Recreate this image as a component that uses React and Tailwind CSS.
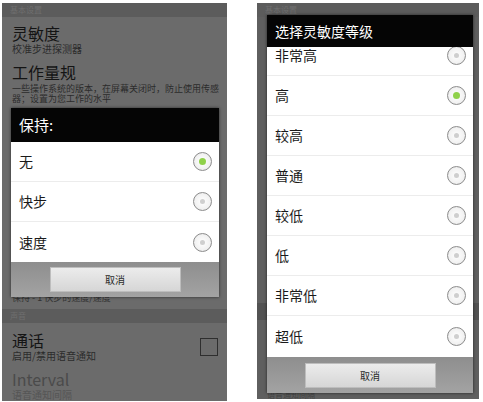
import React from 'react';

const font = { fontFamily: '"Noto Sans CJK SC", "Noto Sans", sans-serif' };

function Radio({ checked }) {
    return (
        <div className="w-[19px] h-[19px] rounded-full border-[1.5px] border-[#8c8c8c] bg-[radial-gradient(circle,#ffffff_0%,#f2f2f2_60%,#d9d9d9_100%)] flex items-center justify-center flex-shrink-0">
            {checked
                ? <div className="w-[7px] h-[7px] rounded-full bg-[#8fd14a]" />
                : <div className="w-[5px] h-[5px] rounded-full bg-[#cfcfcf]" />}
        </div>
    );
}

function OptionRow({ label, checked, last }) {
    return (
        <div className={`h-[40px] flex items-center justify-between pl-[8px] pr-[7px] ${last ? '' : 'border-b border-[#ececec]'}`}>
            <span className="text-[14px] text-[#1a1a1a]">{label}</span>
            <Radio checked={checked} />
        </div>
    );
}

function CancelBar({ height }) {
    return (
        <div className="bg-gradient-to-b from-[#8e8e8e] to-[#a3a3a3] flex items-center justify-center" style={{ height }}>
            <button className="w-[131px] h-[25px] bg-gradient-to-b from-[#ececec] to-[#d6d6d6] border border-[#bdbdbd] text-[10px] text-[#2a2a2a]">取消</button>
        </div>
    );
}

// title 16px line + subtitle 12px line
function SettingItem({ title, sub, dim, right }) {
    return (
        <div className="flex items-center justify-between pl-[10px] pr-[8px]">
            <div className="flex flex-col">
                <span className={`text-[16px] leading-[16px] ${dim ? 'text-[#4a4a4a]' : 'text-[#141414]'}`}>{title}</span>
                <span className={`text-[10px] leading-[12px] mt-[2px] ${dim ? 'text-[#555]' : 'text-[#2b2b2b]'}`}>{sub}</span>
            </div>
            {right}
        </div>
    );
}

function SectionBar({ label }) {
    return (
        <div className="h-[14px] bg-[#5c5c5c] pl-[8px] flex items-center">
            <span className="text-[8px] leading-[10px] text-[#6f6f6f]">{label}</span>
        </div>
    );
}

function LeftPhone() {
    return (
        <div className="relative w-[225px] h-[398px] bg-[#6b6b6b] overflow-hidden">
            <SectionBar label="基本设置" />
            <div className="pt-[8px]">
                <SettingItem title="灵敏度" sub="校准步进探测器" />
            </div>
            <div className="pt-[9px] pl-[10px] pr-[6px]">
                <div className="text-[16px] leading-[16px] text-[#141414]">工作量规</div>
                <div className="mt-[4px] text-[9px] leading-[10px] text-[#2b2b2b]">一些操作系统的版本，在屏幕关闭时，防止使用传感器；设置为您工作的水平</div>
            </div>
            <div className="h-[189px]" />
            <div className="pl-[10px] text-[9px] leading-[10px] text-[#333]">保持 - 1 快步的速度/速度</div>
            <div className="h-[6px]" />
            <SectionBar label="声音" />
            <div className="pt-[9px]">
                <SettingItem
                    title="通话"
                    sub="启用/禁用语音通知"
                    right={<div className="w-[18px] h-[18px] border border-[#2e2e2e] mr-[1px]" />}
                />
            </div>
            <div className="pt-[9px]">
                <SettingItem title="Interval" sub="语音通知间隔" dim />
            </div>

            <div className="absolute left-[9px] top-[105px] w-[208px] shadow-[0_0_3px_rgba(0,0,0,0.6)]">
                <div className="h-[34px] bg-[#050505] flex items-center pl-[8px]">
                    <span className="text-[15px] text-white">保持:</span>
                </div>
                <div className="bg-white">
                    <OptionRow label="无" checked />
                    <OptionRow label="快步" />
                    <OptionRow label="速度" last />
                </div>
                <CancelBar height={35} />
            </div>
        </div>
    );
}

function RightPhone() {
    const levels = ['非常高', '高', '较高', '普通', '较低', '低', '非常低', '超低'];
    return (
        <div className="relative w-[222px] h-[396px] bg-[#5f5f5f] overflow-hidden">
            <SectionBar label="基本设置" />
            <div className="h-[286px]" />
            <div className="h-[17px] bg-[#525252]" />
            <div className="h-[71px]" />
            <div className="pl-[10px] text-[8px] leading-[8px] text-[#444]">语音通知间隔</div>

            <div className="absolute left-[10px] top-[12px] w-[206px] shadow-[0_0_3px_rgba(0,0,0,0.6)]">
                <div className="h-[32px] bg-[#050505] flex items-center pl-[8px]">
                    <span className="text-[14px] text-white">选择灵敏度等级</span>
                </div>
                <div className="h-[310px] bg-white overflow-hidden">
                    <div className="-mt-[11px]">
                        {levels.map((l, i) => (
                            <OptionRow key={l} label={l} checked={l === '高'} last={i === levels.length - 1} />
                        ))}
                    </div>
                </div>
                <CancelBar height={36} />
            </div>
        </div>
    );
}

export default function App() {
    return (
        <div className="w-[483px] h-[402px] bg-white relative" style={font}>
            <div className="flex pt-[3px] pl-[2px] gap-[30px]">
                <LeftPhone />
                <RightPhone />
            </div>
        </div>
    );
}
